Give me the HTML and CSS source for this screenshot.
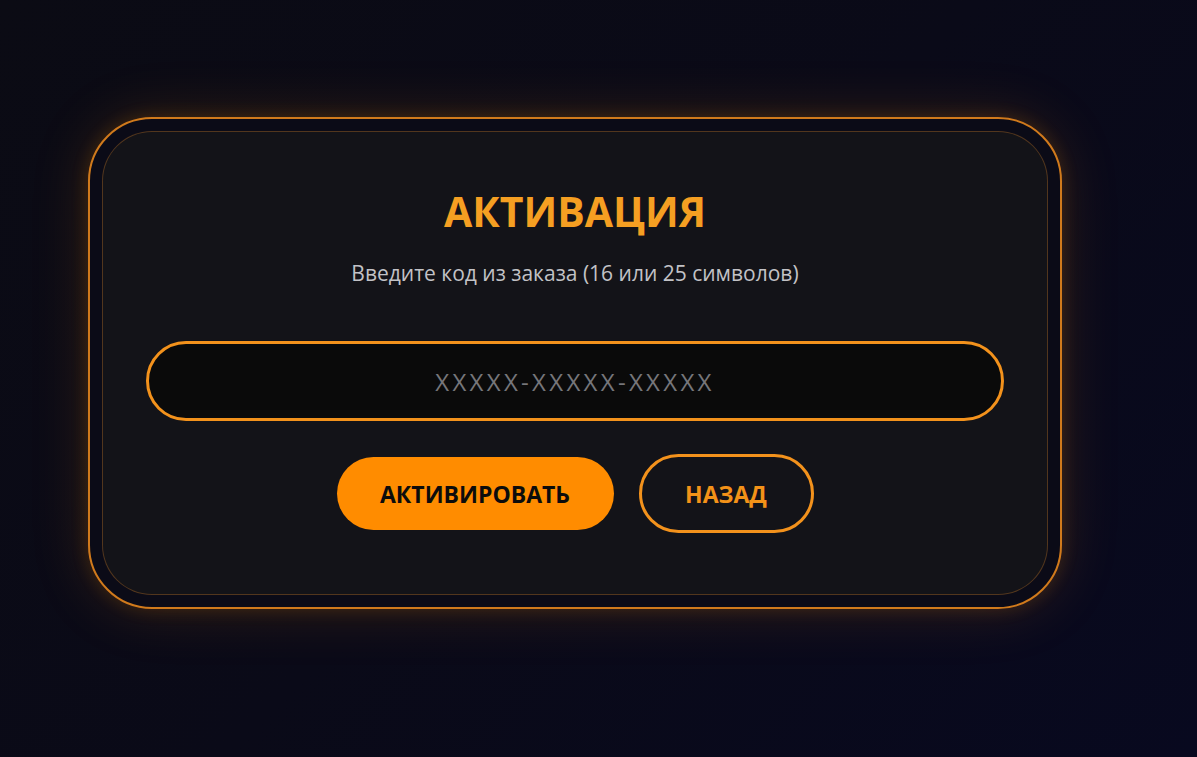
FILE: index.html
```html
<!DOCTYPE html>
<html lang="ru">
<head>
<meta charset="utf-8">
<title>Активация</title>
<link rel="stylesheet" href="styles.css">
</head>
<body>
<main class="page">
  <div class="frame">
    <section class="card">
      <h1 class="title">АКТИВАЦИЯ</h1>
      <p class="subtitle">Введите код из заказа (16 или 25 символов)</p>
      <input class="code-input" type="text" placeholder="XXXXX-XXXXX-XXXXX">
      <div class="actions">
        <button class="btn btn-primary">АКТИВИРОВАТЬ</button>
        <button class="btn btn-outline">НАЗАД</button>
      </div>
    </section>
  </div>
</main>
</body>
</html>
```
FILE: styles.css
```css
html, body {
  margin: 0;
  height: 100%;
}
body {
  background: linear-gradient(135deg, #0b0b14 0%, #0a0a18 50%, #08091f 100%);
  font-family: "Open Sans", "Noto Sans", sans-serif;
  overflow: hidden;
}
.page {
  padding: 117px 0 0 88px;
}
.frame {
  box-sizing: border-box;
  width: 974px;
  padding: 12px;
  border: 2.5px solid #d07a1c;
  border-radius: 64px;
  background: #0b0b17;
  box-shadow: 0 0 60px rgba(255, 140, 0, 0.16), 0 0 18px rgba(255, 140, 0, 0.16);
}
.card {
  box-sizing: border-box;
  height: 464px;
  border: 1px solid rgba(200, 120, 40, 0.35);
  border-radius: 50px;
  background: #131318;
  padding: 54px 43px 0;
  display: flex;
  flex-direction: column;
  align-items: center;
}
.title {
  margin: 0;
  color: #f59f22;
  font-size: 41px;
  font-weight: 700;
  line-height: 50px;
}
.subtitle {
  margin: 23px 0 0;
  color: #c2c2c6;
  font-size: 21px;
  line-height: 28px;
}
.code-input {
  box-sizing: border-box;
  margin-top: 54px;
  width: 100%;
  height: 80px;
  border: 3px solid #f3921c;
  border-radius: 40px;
  background: #0a0a0a;
  color: #ddd;
  font-family: "Open Sans", "Noto Sans", sans-serif;
  font-size: 24px;
  letter-spacing: 3.3px;
  text-align: center;
  outline: none;
}
.code-input::placeholder {
  color: #76767a;
}
.actions {
  margin-top: 33px;
  display: flex;
  align-items: center;
  gap: 25px;
}
.btn {
  box-sizing: border-box;
  font-family: "Open Sans", "Noto Sans", sans-serif;
  font-size: 23px;
  font-weight: 700;
  border-radius: 40px;
  cursor: pointer;
}
.btn-primary {
  width: 277px;
  height: 73px;
  border: none;
  background: #ff8c00;
  color: #0c0c0c;
}
.btn-outline {
  width: 175px;
  height: 79px;
  border: 3px solid #f3921c;
  background: transparent;
  color: #f39218;
}
```
